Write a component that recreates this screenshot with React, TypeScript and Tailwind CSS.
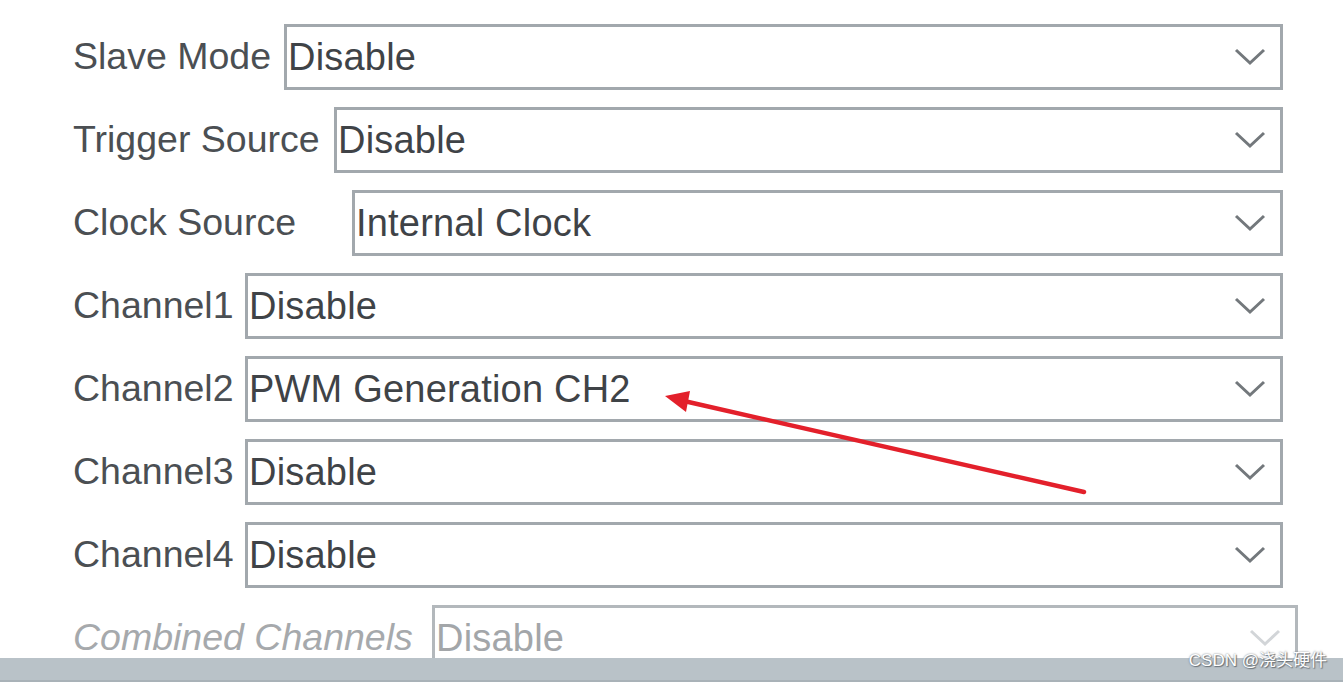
const rows = [
    { label: 'Slave Mode', value: 'Disable', labelW: 'w-[211px]' },
    { label: 'Trigger Source', value: 'Disable', labelW: 'w-[261px]' },
    { label: 'Clock Source', value: 'Internal Clock', labelW: 'w-[279px]' },
    { label: 'Channel1', value: 'Disable', labelW: 'w-[172px]' },
    { label: 'Channel2', value: 'PWM Generation CH2', labelW: 'w-[172px]' },
    { label: 'Channel3', value: 'Disable', labelW: 'w-[172px]' },
    { label: 'Channel4', value: 'Disable', labelW: 'w-[172px]' },
];

const Chevron = ({ muted }: { muted?: boolean }) => (
    <svg width="32" height="18" viewBox="0 0 32 18" className="shrink-0">
        <polyline
            points="2,2 16,15 30,2"
            fill="none"
            stroke={muted ? '#d2d5d8' : '#73787c'}
            strokeWidth="3"
        />
    </svg>
);

const Select = ({ value, muted }: { value: string; muted?: boolean }) => (
    <div
        className={`flex-1 h-[66px] flex items-center justify-between pl-[1px] pr-[14px] border-[3px] bg-white ${
            muted ? 'border-[#b3b8bc] text-[#a3a6a9]' : 'border-[#a2a8ad] text-[#3f4347]'
        }`}
    >
        <span className="text-[38px] leading-none tracking-[0.2px]">{value}</span>
        <Chevron muted={muted} />
    </div>
);

export default function App() {
    return (
        <div className="relative w-full h-[682px] bg-white overflow-hidden font-['Liberation_Sans',Arial,sans-serif]">
            <div className="h-[658px] overflow-hidden pl-[73px] pt-[24px] flex flex-col gap-[17px]">
                {rows.map((r) => (
                    <div key={r.label} className="flex items-center w-[1210px] shrink-0">
                        <span className={`${r.labelW} shrink-0 text-[37.5px] leading-none text-[#4b4f53]`}>{r.label}</span>
                        <Select value={r.value} />
                    </div>
                ))}
                <div className="flex items-center w-[1225px] shrink-0">
                    <span className="w-[359px] shrink-0 text-[37.5px] leading-none italic text-[#a6a9ac]">
                        Combined Channels
                    </span>
                    <Select value="Disable" muted />
                </div>
            </div>
            <div className="h-[24px] bg-[#b9c2c8] border-b-[2px] border-[#a9b2b8]" />

            <svg className="absolute inset-0 pointer-events-none" width="1343" height="682">
                <line x1="1084" y1="492" x2="684" y2="401" stroke="#e3202b" strokeWidth="4.5" strokeLinecap="round" />
                <polygon points="665,396 690,391 686,412" fill="#e3202b" />
            </svg>

            <span className="absolute right-[16px] top-[652px] text-[17px] leading-none text-white font-['Liberation_Sans','Noto_Sans_CJK_SC',sans-serif] [text-shadow:0_0_2px_#6b7278,1px_1px_1px_#6b7278]">
                CSDN @浇头硬件
            </span>
        </div>
    );
}
